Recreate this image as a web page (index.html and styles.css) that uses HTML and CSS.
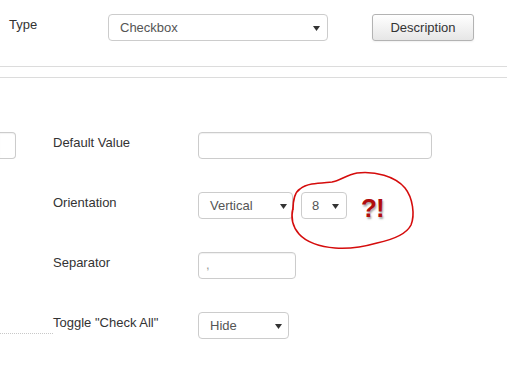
FILE: index.html
```html
<!DOCTYPE html>
<html>
<head>
<meta charset="utf-8">
<link rel="stylesheet" href="styles.css">
</head>
<body>
<div class="page">
  <div class="top">
    <div class="top-label">Type</div>
    <div class="select sel-type"><span>Checkbox</span><svg class="arr" width="7" height="5" viewBox="0 0 7 5"><path d="M0 0H7L3.5 5Z"/></svg></div>
    <button class="btn">Description</button>
  </div>
  <div class="rule rule-1"></div>
  <div class="rule rule-2"></div>
  <div class="form">
    <div class="row">
      <div class="stub"><div class="stub-input"></div></div>
      <div class="label">Default Value</div>
      <div class="ctrl"><div class="input in-default"></div></div>
    </div>
    <div class="row">
      <div class="stub"></div>
      <div class="label">Orientation</div>
      <div class="ctrl">
        <div class="select sel-orient"><span>Vertical</span><svg class="arr" width="7" height="5" viewBox="0 0 7 5"><path d="M0 0H7L3.5 5Z"/></svg></div>
        <div class="select sel-num"><span>8</span><svg class="arr" width="7" height="5" viewBox="0 0 7 5"><path d="M0 0H7L3.5 5Z"/></svg></div>
      </div>
    </div>
    <div class="row">
      <div class="stub"></div>
      <div class="label">Separator</div>
      <div class="ctrl"><div class="input in-sep"><span>,</span></div></div>
    </div>
    <div class="row">
      <div class="stub"><div class="dots"></div></div>
      <div class="label">Toggle "Check All"</div>
      <div class="ctrl"><div class="select sel-hide"><span>Hide</span><svg class="arr" width="7" height="5" viewBox="0 0 7 5"><path d="M0 0H7L3.5 5Z"/></svg></div></div>
    </div>
  </div>
  <div class="note">
    <svg class="ring" width="130" height="82" viewBox="0 0 130 82"><path d="M8 40 C 8 30, 10 22, 15 19 C 22 13, 36 13, 47 12 C 55 11, 61 5, 72 3 C 90 1, 110 6, 120 18 C 128 28, 130 45, 126 55 C 121 65, 106 70, 92 73 C 78 77, 64 79, 50 78 C 35 77, 21 72, 14 64 C 7 56, 6 46, 8 38"/></svg>
    <span class="qx">?!</span>
  </div>
</div>
</body>
</html>
```

FILE: styles.css
```css
* { box-sizing: border-box; }
html, body { margin: 0; padding: 0; background: #fff; }
body {
  font-family: "Liberation Sans", Arial, sans-serif;
  font-size: 13px;
  line-height: 16px;
  color: #333;
}
.page { position: relative; width: 507px; height: 388px; overflow: hidden; }

.top { display: flex; align-items: flex-start; padding: 14px 0 0 9px; height: 41px; }
.top-label { width: 99px; margin-top: 3px; }
.btn {
  margin-left: 44px;
  width: 102px; height: 27px;
  font: 13px/16px "Liberation Sans", Arial, sans-serif;
  color: #333;
  border: 1px solid #b3b3b3;
  border-radius: 3px;
  background: linear-gradient(#ffffff, #e6e6e6);
  box-shadow: 0 1px 2px rgba(0,0,0,.06);
  padding: 0;
}

.rule { border-top: 1px solid #dcdcdc; }
.rule-1 { margin-top: 25px; }
.rule-2 { margin-top: 10px; }

.form { display: flex; flex-direction: column; gap: 33px; padding-top: 54px; }
.row { display: grid; grid-template-columns: 15px 107px 1fr; column-gap: 38px; height: 27px; }
.stub { position: relative; }
.stub-input {
  height: 27px; width: 16px;
  border: 1px solid #ccc; border-left: none;
  border-radius: 0 4px 4px 0;
  box-shadow: inset 0 1px 1px rgba(0,0,0,.05);
}
.dots {
  position: absolute; left: 0; top: 21px;
  width: 53px; border-top: 1px dotted #c8c8c8;
}
.label { padding-top: 3px; white-space: nowrap; }
.ctrl { display: flex; gap: 8px; }

.select {
  position: relative;
  display: flex; align-items: center;
  height: 27px;
  padding-left: 11px;
  border: 1px solid #cccccc;
  border-radius: 4px;
  background: #fff;
  color: #555;
}
.select .arr { position: absolute; top: 11px; fill: #333; }
.sel-type { width: 220px; }
.sel-type .arr { right: 7px; }
.sel-orient { width: 95px; }
.sel-orient .arr { right: 5px; }
.sel-num { width: 46px; padding-left: 10px; }
.sel-num .arr { right: 7px; }
.sel-hide { width: 91px; }
.sel-hide .arr { right: 6px; }

.input {
  height: 27px;
  border: 1px solid #cccccc;
  border-radius: 4px;
  box-shadow: inset 0 1px 1px rgba(0,0,0,.06);
  color: #999;
  padding: 4px 0 0 7px;
}
.in-default { width: 234px; }
.in-sep { width: 98px; }

.note { position: absolute; left: 285px; top: 170px; width: 130px; height: 82px; }
.ring { position: absolute; left: 0; top: 0; fill: none; stroke: #d50c0c; stroke-width: 1.6; }
.qx {
  position: absolute; left: 76px; top: 23px;
  font: bold 26px/30px "Liberation Sans", Arial, sans-serif;
  letter-spacing: -1px;
  color: #b00d0d;
  text-shadow: 1px 2px 2px rgba(0,0,0,.35);
}
```
